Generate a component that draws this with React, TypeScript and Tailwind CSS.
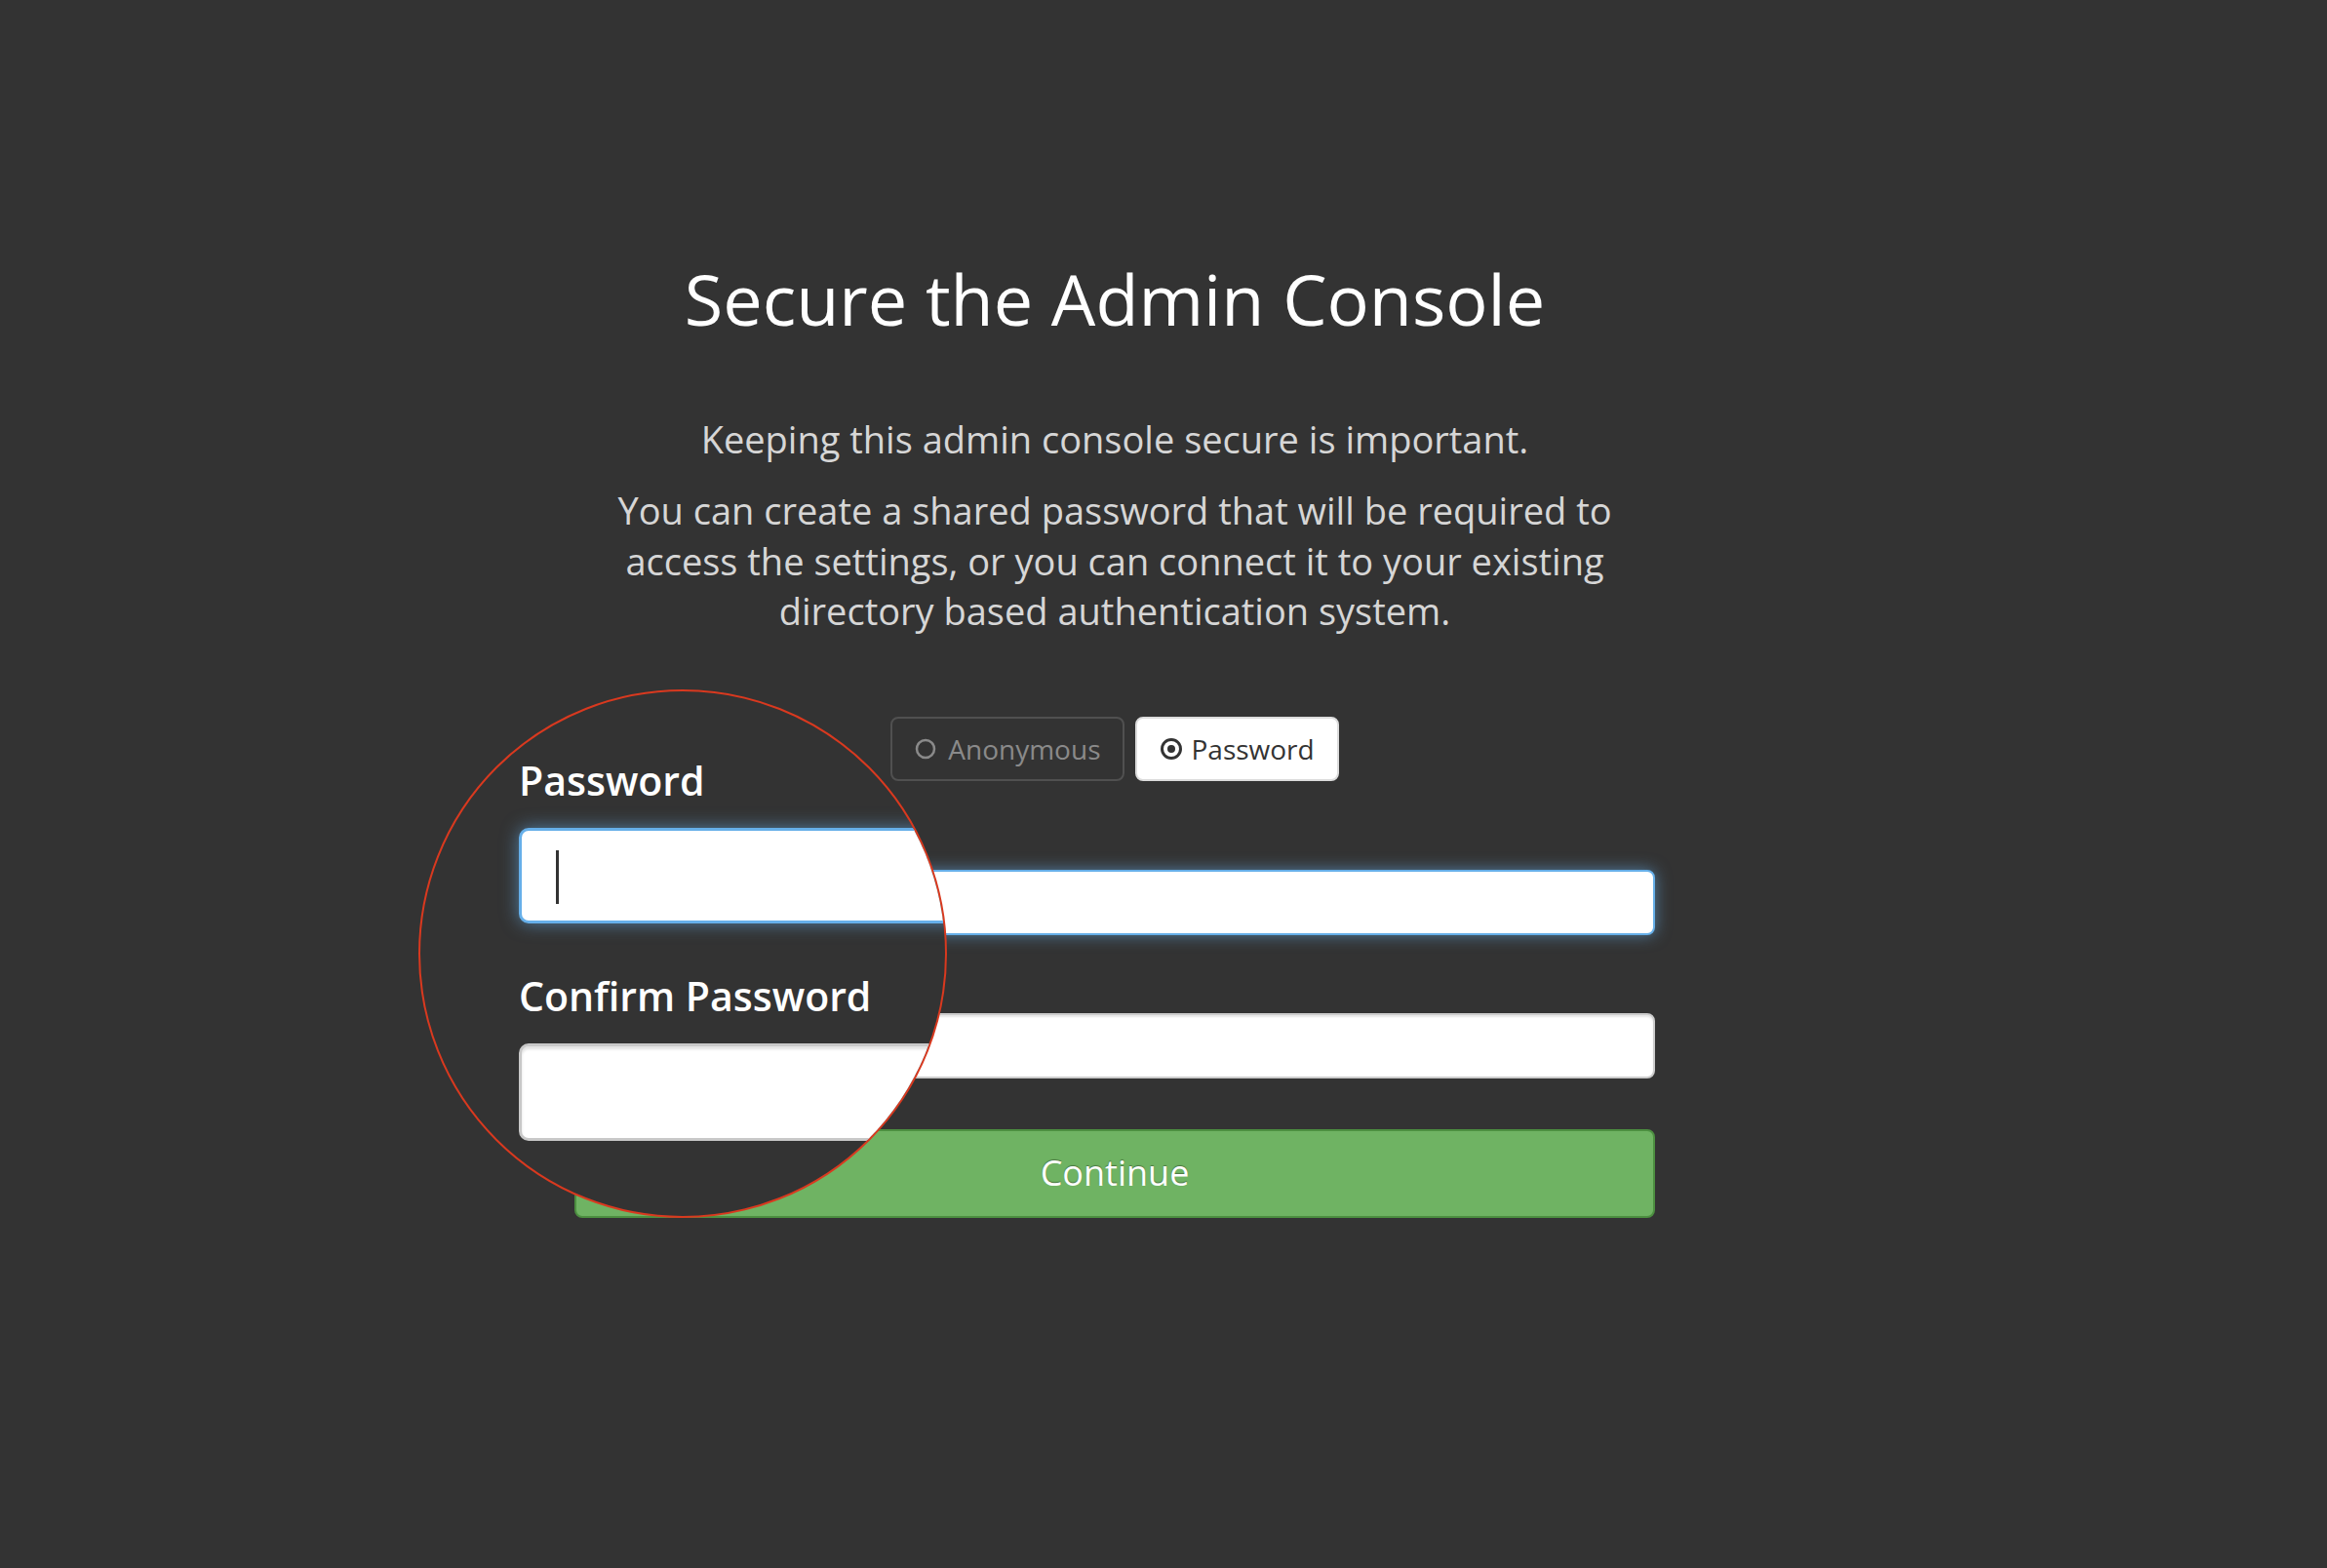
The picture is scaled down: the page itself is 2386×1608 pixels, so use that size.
import React from "react";

const font = "font-['Open_Sans','Liberation_Sans',sans-serif]";

function RadioIcon({ checked }: { checked: boolean }) {
  if (checked) {
    return (
      <svg width="24" height="24" viewBox="0 0 24 24" className="shrink-0">
        <circle cx="12" cy="12" r="9.5" fill="none" stroke="#333" strokeWidth="3" />
        <circle cx="12" cy="12" r="4" fill="#333" />
      </svg>
    );
  }
  return (
    <svg width="22" height="22" viewBox="0 0 22 22" className="shrink-0">
      <circle cx="11" cy="11" r="9" fill="none" stroke="#8a8a8a" strokeWidth="2.5" />
    </svg>
  );
}

// zoomed-in lens over the top-left of the form
function Magnifier() {
  return (
    <div className="absolute left-[429px] top-[707px] w-[542px] h-[542px] rounded-full border-2 border-[#d9391f] bg-[#333333] overflow-hidden">
      <div className="flex flex-col pl-[101px] pt-[70px]">
        <label className="text-[41px] leading-[43px] font-semibold text-white">Password</label>
        <div className="relative mt-[27px] h-[98px] w-[620px] rounded-[10px] border-[3px] border-[#66afe9] bg-white shadow-[0_0_18px_rgba(102,175,233,0.6)]">
          <div className="absolute left-[35px] top-[20px] h-[55px] w-[3px] bg-[#333]" />
        </div>
        <label className="mt-[53px] text-[41px] leading-[43px] font-semibold text-white">Confirm Password</label>
        <div className="mt-[27px] h-[100px] w-[620px] rounded-[10px] border-[3px] border-[#c8c8c8] bg-white shadow-[inset_0_3px_3px_rgba(0,0,0,0.12)]" />
      </div>
    </div>
  );
}

export default function App() {
  return (
    <div className={`relative min-h-[1608px] w-full bg-[#333333] ${font}`}>
      <div className="ml-[589px] w-[1108px] pt-[267px] text-center">
        <h1 className="text-[72px] leading-[79px] font-normal text-white">Secure the Admin Console</h1>
        <p className="mt-[79px] text-[38px] leading-[51.4px] text-[#d6d6d6]">
          Keeping this admin console secure is important.
        </p>
        <p className="mt-[22px] text-[38px] leading-[51.4px] text-[#d6d6d6]">
          You can create a shared password that will be required to
          <br />
          access the settings, or you can connect it to your existing
          <br />
          directory based authentication system.
        </p>

        <div className="mt-[82px] flex justify-center gap-[11px]">
          <button
            type="button"
            className="flex h-[66px] items-center gap-[12px] rounded-[8px] border-2 border-[#505050] px-[23px] text-[28px] text-[#8a8a8a]"
          >
            <RadioIcon checked={false} />
            <span>Anonymous</span>
          </button>
          <button
            type="button"
            className="flex h-[66px] items-center gap-[8px] rounded-[8px] border-2 border-[#dcdcdc] bg-white px-[23px] text-[28px] text-[#333]"
          >
            <RadioIcon checked={true} />
            <span>Password</span>
          </button>
        </div>

        <div className="mt-[41px] flex flex-col text-left">
          <label className="invisible mb-[10px] text-[28px] leading-[40px] font-semibold text-white">Password</label>
          <div className="h-[67px] w-full rounded-[8px] border-2 border-[#66afe9] bg-white shadow-[0_0_16px_rgba(102,175,233,0.6)]" />
          <label className="invisible mt-[30px] mb-[10px] text-[28px] leading-[40px] font-semibold text-white">Confirm Password</label>
          <div className="h-[67px] w-full rounded-[8px] border-2 border-[#cccccc] bg-white shadow-[inset_0_2px_2px_rgba(0,0,0,0.1)]" />
          <button
            type="button"
            className="mt-[52px] h-[91px] w-full rounded-[8px] border-2 border-[#4c8f40] bg-[#6fb363] text-[36px] text-white [text-shadow:0_-1px_1px_rgba(0,0,0,0.35)]"
          >
            Continue
          </button>
        </div>
      </div>

      <Magnifier />
    </div>
  );
}
